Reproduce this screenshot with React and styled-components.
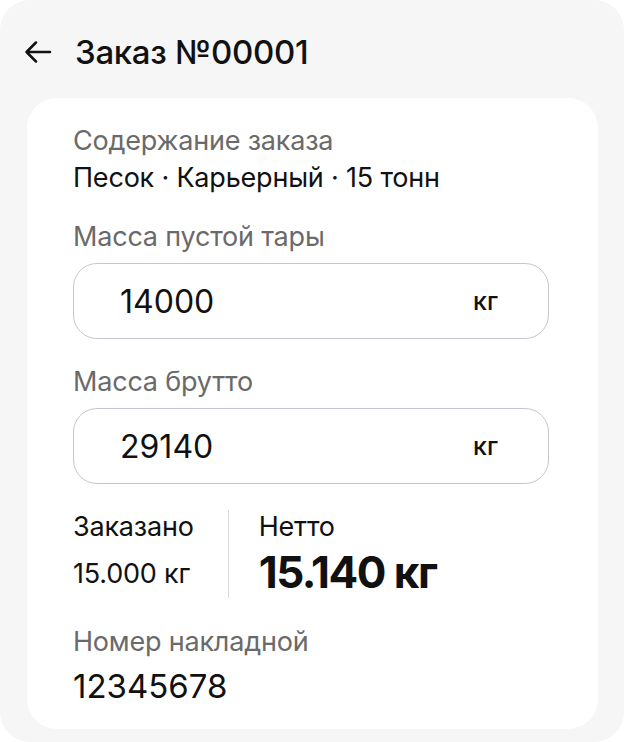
import React from "react";
import styled, { createGlobalStyle } from "styled-components";

const GlobalStyle = createGlobalStyle`
  html, body {
    margin: 0;
    padding: 0;
    background: #ffffff;
  }
  body {
    font-family: "Inter", "Noto Sans", sans-serif;
    color: #111111;
  }
`;

const Screen = styled.div`
  width: 624px;
  height: 742px;
  box-sizing: border-box;
  background: #f6f6f6;
  border-radius: 30px;
  display: flex;
  flex-direction: column;
  padding: 0 26px 13px 27px;
`;

const Header = styled.div`
  height: 98px;
  display: flex;
  align-items: center;
  gap: 22px;
  margin-left: -4px;
  padding-top: 6px;
  box-sizing: border-box;
`;

const BackButton = styled.button`
  border: 0;
  background: none;
  padding: 0;
  width: 30px;
  height: 30px;
  display: flex;
  align-items: center;
  justify-content: center;
  color: #111111;
  cursor: pointer;
`;

const Title = styled.h1`
  margin: 0;
  font-size: 33px;
  line-height: 40px;
  font-weight: 500;
  letter-spacing: -0.3px;
  color: #111111;
`;

const Card = styled.div`
  flex: 1;
  background: #ffffff;
  border-radius: 30px;
  padding: 27px 49px 0 46px;
  display: flex;
  flex-direction: column;
`;

const Label = styled.div`
  font-size: 27px;
  line-height: 32px;
  color: #6a6a6a;
  letter-spacing: -0.2px;
`;

const Value = styled.div`
  font-size: ${(p) => (p.$large ? "33px" : "27px")};
  line-height: ${(p) => (p.$large ? "40px" : "32px")};
  color: #111111;
  letter-spacing: ${(p) => (p.$large ? "0px" : "-0.2px")};
  margin-top: ${(p) => p.$gap || 5}px;
`;

const Field = styled.div`
  margin-top: ${(p) => p.$top}px;
`;

const InputBox = styled.div`
  margin-top: 10px;
  height: 76px;
  box-sizing: border-box;
  border: 1.5px solid #c6c6ce;
  border-radius: 24px;
  display: flex;
  align-items: center;
  justify-content: space-between;
  padding: 0 50px 0 46px;
`;

const InputValue = styled.span`
  font-size: 32px;
  color: #111111;
`;

const Unit = styled.span`
  font-size: 25px;
  font-weight: 500;
  color: #111111;
`;

const Stats = styled.div`
  margin-top: 26px;
  display: flex;
  align-items: stretch;
`;

const StatCol = styled.div`
  display: flex;
  flex-direction: column;
  padding-top: 1px;
`;

const Divider = styled.div`
  width: 1px;
  background: #d9d9d9;
  height: 88px;
  margin: 0 30px 0 34px;
`;

const StatLabel = styled.div`
  font-size: 27px;
  line-height: 32px;
  color: #111111;
  letter-spacing: -0.2px;
`;

const StatValue = styled.div`
  margin-top: ${(p) => (p.$big ? 5 : 15)}px;
  font-size: ${(p) => (p.$big ? "44px" : "27px")};
  font-weight: ${(p) => (p.$big ? 700 : 400)};
  line-height: ${(p) => (p.$big ? "48px" : "32px")};
  letter-spacing: ${(p) => (p.$big ? "-1.5px" : "-0.2px")};
  color: #111111;
`;

const ArrowIcon = () => (
  <svg width="30" height="30" viewBox="0 0 30 30" fill="none">
    <path
      d="M27 15H3.5M13 5.5L3.5 15L13 24.5"
      stroke="currentColor"
      strokeWidth="2.5"
      strokeLinecap="round"
      strokeLinejoin="round"
    />
  </svg>
);

const MassInput = ({ value }) => (
  <InputBox>
    <InputValue>{value}</InputValue>
    <Unit>кг</Unit>
  </InputBox>
);

export default function App() {
  return (
    <>
      <GlobalStyle />
      <Screen>
        <Header>
          <BackButton aria-label="Назад">
            <ArrowIcon />
          </BackButton>
          <Title>Заказ №00001</Title>
        </Header>
        <Card>
          <Label>Содержание заказа</Label>
          <Value>Песок · Карьерный · 15 тонн</Value>

          <Field $top={27}>
            <Label>Масса пустой тары</Label>
            <MassInput value="14000" />
          </Field>

          <Field $top={27}>
            <Label>Масса брутто</Label>
            <MassInput value="29140" />
          </Field>

          <Stats>
            <StatCol>
              <StatLabel>Заказано</StatLabel>
              <StatValue>15.000 кг</StatValue>
            </StatCol>
            <Divider />
            <StatCol>
              <StatLabel>Нетто</StatLabel>
              <StatValue $big>15.140 кг</StatValue>
            </StatCol>
          </Stats>

          <Field $top={28}>
            <Label>Номер накладной</Label>
            <Value $large $gap={8}>
              12345678
            </Value>
          </Field>
        </Card>
      </Screen>
    </>
  );
}
